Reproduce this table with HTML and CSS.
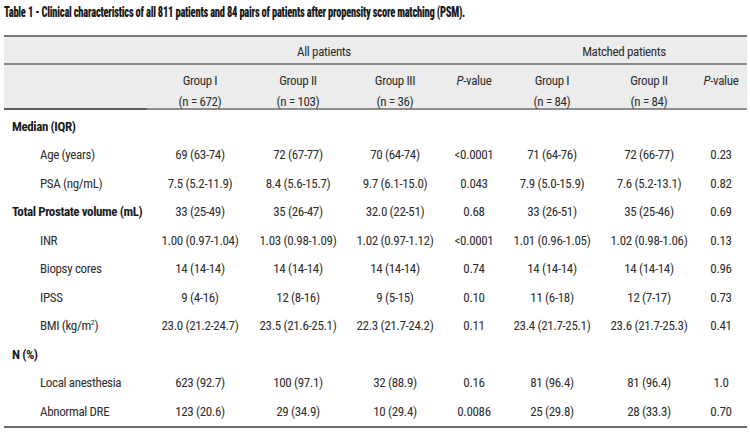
FILE: index.html
```html
<!DOCTYPE html>
<html lang="en">
<head>
<meta charset="utf-8">
<title>Table 1</title>
<link rel="stylesheet" href="styles.css">
</head>
<body>
<h1 class="title">Table 1 - Clinical characteristics of all 811 patients and 84 pairs of patients after propensity score matching (PSM).</h1>
<div class="tbl">
  <div class="row head1">
    <div class="cell"></div>
    <div class="cell c span4">All patients</div>
    <div class="cell c span3">Matched patients</div>
  </div>
  <div class="row head2">
    <div class="cell lab-head"></div>
    <div class="cell c">Group I<br>(n = 672)</div>
    <div class="cell c">Group II<br>(n = 103)</div>
    <div class="cell c">Group III<br>(n = 36)</div>
    <div class="cell c"><i>P</i>-value</div>
    <div class="cell c">Group I<br>(n = 84)</div>
    <div class="cell c">Group II<br>(n = 84)</div>
    <div class="cell c"><i>P</i>-value</div>
  </div>
  <div class="tbody">
    <div class="row">
      <div class="cell cat">Median (IQR)</div>
    </div>
    <div class="row">
      <div class="cell sub">Age (years)</div>
      <div class="cell c">69 (63-74)</div>
      <div class="cell c">72 (67-77)</div>
      <div class="cell c">70 (64-74)</div>
      <div class="cell c">&lt;0.0001</div>
      <div class="cell c">71 (64-76)</div>
      <div class="cell c">72 (66-77)</div>
      <div class="cell c">0.23</div>
    </div>
    <div class="row">
      <div class="cell sub">PSA (ng/mL)</div>
      <div class="cell c">7.5 (5.2-11.9)</div>
      <div class="cell c">8.4 (5.6-15.7)</div>
      <div class="cell c">9.7 (6.1-15.0)</div>
      <div class="cell c">0.043</div>
      <div class="cell c">7.9 (5.0-15.9)</div>
      <div class="cell c">7.6 (5.2-13.1)</div>
      <div class="cell c">0.82</div>
    </div>
    <div class="row">
      <div class="cell cat">Total Prostate volume (mL)</div>
      <div class="cell c">33 (25-49)</div>
      <div class="cell c">35 (26-47)</div>
      <div class="cell c">32.0 (22-51)</div>
      <div class="cell c">0.68</div>
      <div class="cell c">33 (26-51)</div>
      <div class="cell c">35 (25-46)</div>
      <div class="cell c">0.69</div>
    </div>
    <div class="row">
      <div class="cell sub">INR</div>
      <div class="cell c">1.00 (0.97-1.04)</div>
      <div class="cell c">1.03 (0.98-1.09)</div>
      <div class="cell c">1.02 (0.97-1.12)</div>
      <div class="cell c">&lt;0.0001</div>
      <div class="cell c">1.01 (0.96-1.05)</div>
      <div class="cell c">1.02 (0.98-1.06)</div>
      <div class="cell c">0.13</div>
    </div>
    <div class="row">
      <div class="cell sub">Biopsy cores</div>
      <div class="cell c">14 (14-14)</div>
      <div class="cell c">14 (14-14)</div>
      <div class="cell c">14 (14-14)</div>
      <div class="cell c">0.74</div>
      <div class="cell c">14 (14-14)</div>
      <div class="cell c">14 (14-14)</div>
      <div class="cell c">0.96</div>
    </div>
    <div class="row">
      <div class="cell sub">IPSS</div>
      <div class="cell c">9 (4-16)</div>
      <div class="cell c">12 (8-16)</div>
      <div class="cell c">9 (5-15)</div>
      <div class="cell c">0.10</div>
      <div class="cell c">11 (6-18)</div>
      <div class="cell c">12 (7-17)</div>
      <div class="cell c">0.73</div>
    </div>
    <div class="row">
      <div class="cell sub">BMI (kg/m<sup>2</sup>)</div>
      <div class="cell c">23.0 (21.2-24.7)</div>
      <div class="cell c">23.5 (21.6-25.1)</div>
      <div class="cell c">22.3 (21.7-24.2)</div>
      <div class="cell c">0.11</div>
      <div class="cell c">23.4 (21.7-25.1)</div>
      <div class="cell c">23.6 (21.7-25.3)</div>
      <div class="cell c">0.41</div>
    </div>
    <div class="row">
      <div class="cell cat">N (%)</div>
    </div>
    <div class="row">
      <div class="cell sub">Local anesthesia</div>
      <div class="cell c">623 (92.7)</div>
      <div class="cell c">100 (97.1)</div>
      <div class="cell c">32 (88.9)</div>
      <div class="cell c">0.16</div>
      <div class="cell c">81 (96.4)</div>
      <div class="cell c">81 (96.4)</div>
      <div class="cell c">1.0</div>
    </div>
    <div class="row">
      <div class="cell sub">Abnormal DRE</div>
      <div class="cell c">123 (20.6)</div>
      <div class="cell c">29 (34.9)</div>
      <div class="cell c">10 (29.4)</div>
      <div class="cell c">0.0086</div>
      <div class="cell c">25 (29.8)</div>
      <div class="cell c">28 (33.3)</div>
      <div class="cell c">0.70</div>
    </div>
  </div>
</div>
</body>
</html>
```
FILE: styles.css
```css
html, body {
  margin: 0;
  padding: 0;
  background: #ffffff;
}
body {
  padding: 0 3px 0 4px;
  font-family: "Roboto Condensed", Roboto, "Liberation Sans", sans-serif;
  font-stretch: 75%;
  font-size: 13px;
  letter-spacing: -0.35px;
  color: #2e2e2e;
}
.title {
  margin: 0;
  padding-top: 4px;
  font-size: 14px;
  line-height: 16px;
  font-weight: 900;
  letter-spacing: -0.3px;
  color: #1a1a1a;
  white-space: nowrap;
  transform: scaleX(0.748);
  transform-origin: left center;
}
.tbl {
  margin-top: 15px;
  border-top: 2px solid #7a7a7a;
  border-bottom: 2px solid #6e6e6e;
}
.row {
  display: grid;
  grid-template-columns: 143px 106px 90px 104px 54px 102px 92px 52px;
  height: 28.5px;
  align-items: center;
  white-space: nowrap;
}
.head1 {
  background: #ececec;
  border-bottom: 2px solid #8a8a8a;
  padding-top: 2px;
  box-sizing: content-box;
  height: 24px;
}
.head2 {
  background: #ececec;
  align-items: start;
  padding-top: 5px;
  line-height: 21px;
  border-bottom: 2px solid #8e8e8e;
  box-sizing: content-box;
  height: 38px;
}
.lab-head {
  height: 43px;
  margin-top: -5px;
  border-bottom: 2px solid #5e5e5e;
  margin-bottom: -2px;
}
.span4 { grid-column: span 4; }
.span3 { grid-column: span 3; }
.c { text-align: center; }
.tbody {
  padding-top: 2px;
}
.cat {
  padding-left: 8px;
  font-weight: bold;
  letter-spacing: -0.4px;
  color: #1c1c1c;
}
.sub {
  padding-left: 36px;
}
sup {
  font-size: 8px;
  line-height: 0;
  vertical-align: 5px;
}
i {
  font-style: italic;
}
```
